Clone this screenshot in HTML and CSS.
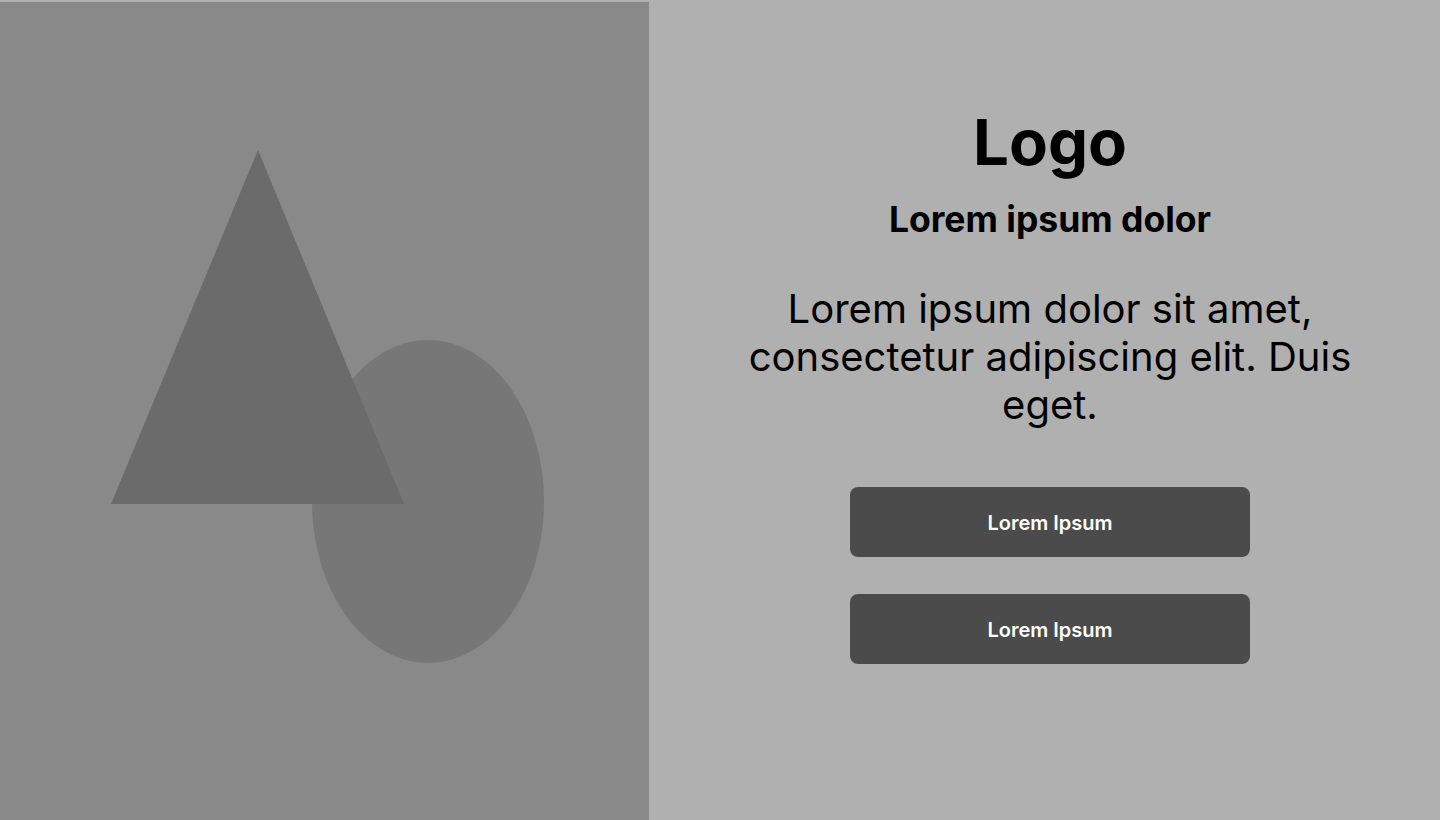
FILE: index.html
```html
<!DOCTYPE html>
<html lang="en">
<head>
<meta charset="utf-8">
<title>Login</title>
<link rel="stylesheet" href="styles.css">
</head>
<body>
<div class="page">
  <div class="hero">
    <svg class="shapes" width="649" height="818" viewBox="0 0 649 818">
      <ellipse cx="428" cy="499.5" rx="116" ry="161.5" fill="#777777"/>
      <polygon points="258,148 404,502 111,502" fill="#6b6b6b"/>
    </svg>
  </div>
  <div class="panel">
    <div class="content">
      <h1 class="logo">Logo</h1>
      <h2 class="title">Lorem ipsum dolor</h2>
      <p class="lead">Lorem ipsum dolor sit amet, consectetur adipiscing elit. Duis eget.</p>
      <div class="actions">
        <button class="btn">Lorem Ipsum</button>
        <button class="btn">Lorem Ipsum</button>
      </div>
    </div>
  </div>
</div>
</body>
</html>
```
FILE: styles.css
```css
* { box-sizing: border-box; }
html, body { margin: 0; padding: 0; }
body {
  background: #b0b0b0;
  font-family: Inter, "Noto Sans", sans-serif;
  color: #000;
}
.page {
  display: flex;
  height: 820px;
  width: 1440px;
  overflow: hidden;
}
.hero {
  width: 649px;
  flex: 0 0 649px;
  margin-top: 2px;
  background: #898989;
}
.shapes { display: block; }
.panel {
  flex: 1;
  padding: 102px 80px 0 91px;
}
.content {
  width: 620px;
  display: flex;
  flex-direction: column;
  align-items: center;
  text-align: center;
}
.logo {
  margin: 0;
  font-size: 63.5px;
  font-weight: 700;
  line-height: 80px;
}
.title {
  margin: 16px 0 0;
  font-size: 35.5px;
  font-weight: 700;
  line-height: 44px;
}
.lead {
  margin: 43px 0 0;
  font-size: 40px;
  font-weight: 400;
  line-height: 48px;
}
.actions {
  margin-top: 58px;
  display: flex;
  flex-direction: column;
  gap: 37px;
}
.btn {
  width: 400px;
  height: 70px;
  border: 0;
  border-radius: 8px;
  background: #4b4b4b;
  color: #fff;
  font-family: Inter, "Noto Sans", sans-serif;
  font-size: 20px;
  font-weight: 600;
  padding: 2px 0 0;
}
```
